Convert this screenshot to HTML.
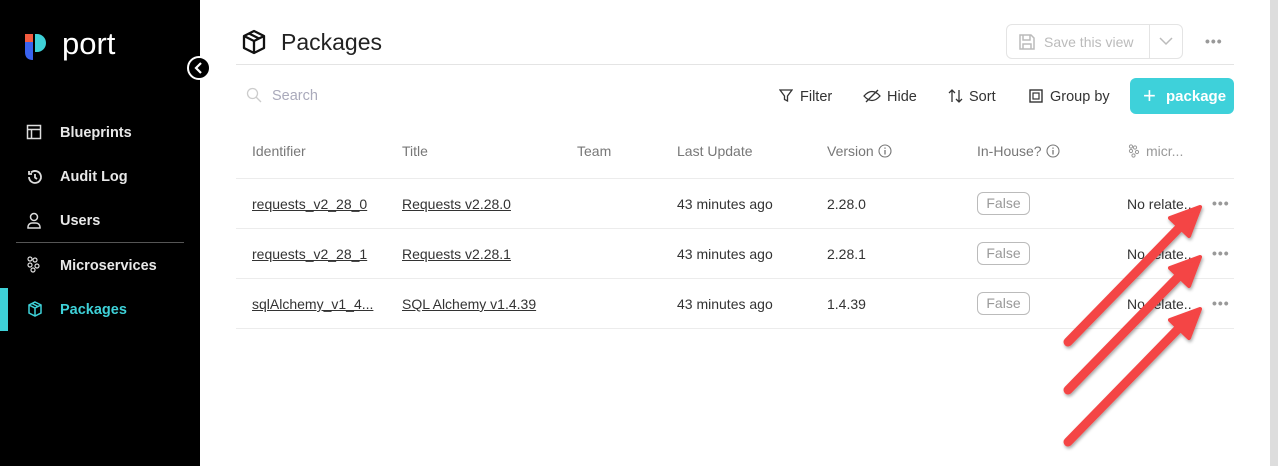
<!DOCTYPE html>
<html><head><meta charset="utf-8"><style>
*{box-sizing:border-box;margin:0;padding:0}
body{width:1278px;height:466px;overflow:hidden;background:#fff;font-family:"Liberation Sans",sans-serif;position:relative;color:#222}
.sb{position:absolute;left:0;top:0;width:200px;height:466px;background:#000}
.nav{position:absolute;left:60px;color:#e8e8e8;font-size:14.5px;font-weight:bold}
.ic{position:absolute;left:26px}
.abs{position:absolute}
.hd{position:absolute;font-size:14px;color:#777}
.cell{position:absolute;font-size:14px;color:#333}
.u{text-decoration:underline}
.line{position:absolute;left:236px;width:998px;height:1px;background:#ececec}
.badge{position:absolute;left:977px;width:53px;height:23px;border:1px solid #bbb;border-radius:6px;color:#999;font-size:14px;text-align:center;line-height:21px}
.dots{position:absolute;left:1212px;color:#999;font-size:14px;letter-spacing:1px;font-weight:bold}
.tb{position:absolute;top:89px;font-size:14.5px;color:#333}
.inf{display:inline-block;vertical-align:-2px;margin-left:4px}
</style></head><body>
<div class="sb">
 <svg class="abs" style="left:24px;top:32px" width="24" height="30" viewBox="0 0 24 30">
  <path d="M1 2 h8 v8 h-8z" fill="#f35b3f"/><path d="M1 10 h8 v18 q-8 0 -8 -8z" fill="#3a63f0"/><path d="M11 2 h2 a9 9 0 0 1 0 18 h-2z" fill="#3ed1d8"/>
 </svg>
 <div class="abs" style="left:62px;top:26px;color:#fff;font-size:31px">port</div>
 <svg class="ic" style="top:124px" width="16" height="16"><rect x="1.5" y="1.5" width="13" height="13" fill="none" stroke="#ddd" stroke-width="1.5"/><path d="M1.5 5.5h13M5.5 5.5v9" stroke="#ddd" stroke-width="1.5"/></svg>
 <div class="nav" style="top:125px">Blueprints</div>
 <svg class="ic" style="top:168px" width="18" height="18"><path d="M3 9a6 6 0 1 0 2-4.5M3 3v3h3M9 6v3.5l2 1.5" fill="none" stroke="#ddd" stroke-width="1.8"/></svg>
 <div class="nav" style="top:169px">Audit Log</div>
 <svg class="ic" style="top:212px" width="16" height="18"><circle cx="8" cy="5" r="3.5" fill="none" stroke="#ddd" stroke-width="1.5"/><path d="M2 16h12v-1a4 4 0 0 0-4-4H6a4 4 0 0 0-4 4z" fill="none" stroke="#ddd" stroke-width="1.5"/></svg>
 <div class="nav" style="top:213px">Users</div>
 <div class="abs" style="left:16px;top:242px;width:168px;height:1px;background:#555"></div>
 <svg class="ic" style="top:256px" width="16" height="18"><g fill="none" stroke="#ddd" stroke-width="1.2"><circle cx="4" cy="3" r="2"/><circle cx="9" cy="4" r="2"/><circle cx="4" cy="9" r="2"/><circle cx="11" cy="10" r="2"/><circle cx="7" cy="14" r="2"/></g></svg>
 <div class="nav" style="top:258px">Microservices</div>
 <div class="abs" style="left:0;top:288px;width:8px;height:43px;background:#3ed1d8"></div>
 <svg class="ic" style="top:300px" width="18" height="18"><path d="M9 2l6 3v8l-6 3-6-3V5zM3 5l6 3 6-3M9 8v8M6 3.5l6 3" fill="none" stroke="#3ed1d8" stroke-width="1.5"/></svg>
 <div class="nav" style="top:302px;color:#3ed1d8">Packages</div>
</div>
<svg class="abs" style="left:187px;top:56px" width="24" height="24"><circle cx="12" cy="12" r="11" fill="#000" stroke="#fff" stroke-width="2"/><path d="M14 7l-5 5 5 5" fill="none" stroke="#fff" stroke-width="2.2"/></svg>
<div class="abs" style="left:1270px;top:0;width:8px;height:466px;background:#ddd"></div>

<svg class="abs" style="left:240px;top:28px" width="28" height="28" viewBox="0 0 28 28"><path d="M14 3l10 5v12l-10 5-10-5V8zM4 8l10 5 10-5M14 13v12M9 5.5l10 5" fill="none" stroke="#111" stroke-width="2.3" stroke-linejoin="round"/></svg>
<div class="abs" style="left:281px;top:29px;font-size:23px;color:#222">Packages</div>
<div class="abs" style="left:1006px;top:24px;width:177px;height:35px;border:1px solid #e4e4e4;border-radius:6px"></div>
<div class="abs" style="left:1149px;top:24px;width:1px;height:35px;background:#e4e4e4"></div>
<svg class="abs" style="left:1018px;top:33px" width="18" height="18"><path d="M2 2h11l3 3v11H2z M5 2v5h7V2 M5 16v-5h8v5" fill="none" stroke="#bbb" stroke-width="1.5"/></svg>
<div class="abs" style="left:1044px;top:34px;font-size:14px;color:#bbb">Save this view</div>
<svg class="abs" style="left:1158px;top:36px" width="16" height="10"><path d="M2 2l6 6 6-6" fill="none" stroke="#bbb" stroke-width="1.5"/></svg>
<div class="abs" style="left:1205px;top:33px;color:#999;font-size:14px;font-weight:bold;letter-spacing:1px">•••</div>
<div class="line" style="top:64px;background:#e4e4e4"></div>

<svg class="abs" style="left:246px;top:87px" width="16" height="16"><circle cx="6.5" cy="6.5" r="5" fill="none" stroke="#ccc" stroke-width="1.3"/><path d="M10 10l5 5" stroke="#ccc" stroke-width="1.3"/></svg>
<div class="abs" style="left:272px;top:88px;font-size:14.5px;color:#aab">Search</div>
<svg class="abs" style="left:779px;top:89px" width="14" height="14"><path d="M1 1h12l-4.5 6v5l-3-1.5V7z" fill="none" stroke="#333" stroke-width="1.3"/></svg>
<div class="tb" style="left:800px">Filter</div>
<svg class="abs" style="left:863px;top:89px" width="18" height="14"><path d="M1 7q8-9 16 0q-8 9-16 0z" fill="none" stroke="#333" stroke-width="1.3"/><path d="M3 13L15 1" stroke="#333" stroke-width="1.3"/></svg>
<div class="tb" style="left:887px">Hide</div>
<svg class="abs" style="left:948px;top:88px" width="16" height="16"><path d="M4 14V2M1 5l3-3 3 3M11 2v12M8 11l3 3 3-3" fill="none" stroke="#333" stroke-width="1.3"/></svg>
<div class="tb" style="left:969px">Sort</div>
<svg class="abs" style="left:1029px;top:89px" width="14" height="14"><rect x="1" y="1" width="12" height="12" fill="none" stroke="#333" stroke-width="1.4"/><rect x="4" y="4" width="6" height="6" fill="none" stroke="#333" stroke-width="1.2"/></svg>
<div class="tb" style="left:1050px">Group by</div>
<div class="abs" style="left:1130px;top:78px;width:104px;height:36px;background:#3ed1da;border-radius:6px"></div>
<div class="abs" style="left:1143px;top:83px;color:#fff;font-size:22px;font-weight:200">+</div>
<div class="abs" style="left:1166px;top:88px;color:#fff;font-size:15px;font-weight:bold">package</div>

<div class="hd" style="left:252px;top:143px">Identifier</div>
<div class="hd" style="left:402px;top:143px">Title</div>
<div class="hd" style="left:577px;top:143px">Team</div>
<div class="hd" style="left:677px;top:143px">Last Update</div>
<div class="hd" style="left:827px;top:143px">Version<svg class="inf" width="14" height="14"><circle cx="7" cy="7" r="6" fill="none" stroke="#777" stroke-width="1.1"/><path d="M7 6v4.5M7 3.5v1.3" stroke="#777" stroke-width="1.3"/></svg></div>
<div class="hd" style="left:977px;top:143px">In-House?<svg class="inf" width="14" height="14"><circle cx="7" cy="7" r="6" fill="none" stroke="#777" stroke-width="1.1"/><path d="M7 6v4.5M7 3.5v1.3" stroke="#777" stroke-width="1.3"/></svg></div>
<svg class="abs" style="left:1128px;top:144px" width="12" height="14"><g fill="none" stroke="#999" stroke-width="1"><circle cx="3" cy="2.5" r="1.6"/><circle cx="7" cy="3.5" r="1.6"/><circle cx="3" cy="7" r="1.6"/><circle cx="9" cy="8" r="1.6"/><circle cx="5.5" cy="11.5" r="1.6"/></g></svg>
<div class="hd" style="left:1146px;top:143px;color:#999">micr...</div>
<div class="line" style="top:178px"></div>

<div class="cell u" style="left:252px;top:196px">requests_v2_28_0</div>
<div class="cell u" style="left:402px;top:196px">Requests v2.28.0</div>
<div class="cell" style="left:677px;top:196px">43 minutes ago</div>
<div class="cell" style="left:827px;top:196px">2.28.0</div>
<div class="badge" style="top:192px">False</div>
<div class="cell" style="left:1127px;top:196px">No relate..</div>
<div class="dots" style="top:195px">•••</div>
<div class="line" style="top:228px"></div>

<div class="cell u" style="left:252px;top:246px">requests_v2_28_1</div>
<div class="cell u" style="left:402px;top:246px">Requests v2.28.1</div>
<div class="cell" style="left:677px;top:246px">43 minutes ago</div>
<div class="cell" style="left:827px;top:246px">2.28.1</div>
<div class="badge" style="top:242px">False</div>
<div class="cell" style="left:1127px;top:246px">No relate..</div>
<div class="dots" style="top:245px">•••</div>
<div class="line" style="top:278px"></div>

<div class="cell u" style="left:252px;top:296px">sqlAlchemy_v1_4...</div>
<div class="cell u" style="left:402px;top:296px">SQL Alchemy v1.4.39</div>
<div class="cell" style="left:677px;top:296px">43 minutes ago</div>
<div class="cell" style="left:827px;top:296px">1.4.39</div>
<div class="badge" style="top:292px">False</div>
<div class="cell" style="left:1127px;top:296px">No relate..</div>
<div class="dots" style="top:295px">•••</div>
<div class="line" style="top:328px"></div>

<svg class="abs" style="left:0;top:0" width="1278" height="466">
<defs><filter id="sh"><feDropShadow dx="1" dy="2" stdDeviation="1.5" flood-color="#000" flood-opacity="0.35"/></filter></defs>
<g filter="url(#sh)" fill="#f44444" stroke="#f44444">
 <path d="M1068 342L1182 225" stroke-width="9" stroke-linecap="round"/>
 <path d="M1200 207L1170 218L1189 236z" stroke-width="4" stroke-linejoin="round"/>
 <path d="M1068 390L1182 273" stroke-width="9" stroke-linecap="round"/>
 <path d="M1200 257L1170 268L1189 286z" stroke-width="4" stroke-linejoin="round"/>
 <path d="M1068 442L1182 325" stroke-width="9" stroke-linecap="round"/>
 <path d="M1200 309L1170 320L1189 338z" stroke-width="4" stroke-linejoin="round"/>
</g>
</svg>
</body></html>
